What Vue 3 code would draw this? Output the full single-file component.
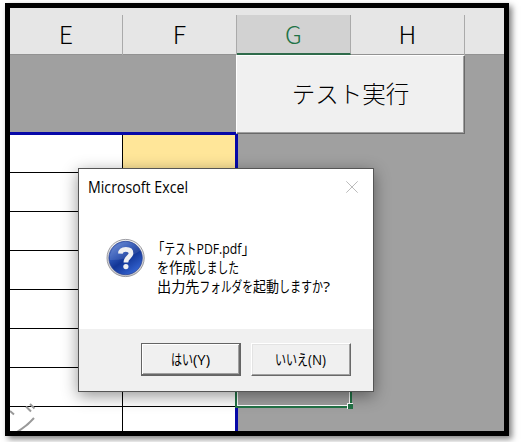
<script setup>
const columns = ['E', 'F', 'G', 'H']
const rows = [1, 2, 3, 4, 5, 6, 7, 8]
const message = [
  { y: 24, runs: [
    { t: '「', x: -5, w: 12.5 }, { t: 'テスト', x: 7.5, w: 32 },
    { t: 'PDF.pdf', x: 39.5, w: 45, latin: true }, { t: '」', x: 84.5, w: 14 },
  ] },
  { y: 43, runs: [
    { t: 'を', x: 0, w: 12 }, { t: '作成', x: 12, w: 27 }, { t: 'しました', x: 39, w: 43 },
  ] },
  { y: 62, runs: [
    { t: '出力先', x: 0, w: 42.5 }, { t: 'フォルダを', x: 42.5, w: 53.5 },
    { t: '起動', x: 96, w: 26 }, { t: 'しますか', x: 122, w: 44 }, { t: '?', x: 166, w: 7, latin: true },
  ] },
]
</script>

<template>
  <div class="page">
    <div class="window">
      <header class="heads">
        <div v-for="c in columns" :key="c" class="head" :class="{ active: c === 'G' }"><span>{{ c }}</span></div>
      </header>
      <div class="band">
        <button class="run">テスト実行</button>
      </div>
      <div class="body">
        <div class="table">
          <div v-for="r in rows" :key="r" class="row">
            <div class="cell"></div>
            <div class="cell" :class="{ gold: r === 1 }"></div>
          </div>
        </div>
      </div>
      <svg class="doodle" width="28" height="30" viewBox="0 0 28 30">
        <path d="M0 10L4 13.5M16 5.5L21 10.5M20 3L24.5 7.5" />
        <path d="M7 31Q17 25 24 17" />
      </svg>
      <div class="selection"><i></i></div>

      <section class="dialog">
        <div class="title">
          <svg width="120" height="24"><text x="0" y="18" textLength="100" lengthAdjust="spacingAndGlyphs">Microsoft Excel</text></svg>
          <svg class="close" width="12" height="12" viewBox="0 0 12 12"><path d="M.3.3L11.7 11.7M11.7.3L.3 11.7" /></svg>
        </div>
        <div class="content">
          <svg class="icon" width="40" height="40" viewBox="0 0 40 40">
            <defs>
              <linearGradient id="blue" x1="0" y1="0" x2=".7" y2="1">
                <stop offset="0" stop-color="#6e8dd6" /><stop offset=".4" stop-color="#2a52b4" />
                <stop offset=".6" stop-color="#123596" /><stop offset="1" stop-color="#3565d2" />
              </linearGradient>
              <linearGradient id="ring" x1="0" y1="0" x2="0" y2="1">
                <stop offset="0" stop-color="#f4f4f4" /><stop offset="1" stop-color="#c4c4c8" />
              </linearGradient>
            </defs>
            <circle cx="19.6" cy="20" r="18.6" fill="url(#ring)" stroke="#929298" stroke-width=".9" />
            <circle cx="19.6" cy="20" r="16.7" fill="url(#blue)" stroke="#273f91" stroke-width=".7" />
            <path d="M4 22Q20 23 35 12A17 17 0 0 0 4 17Z" fill="#fff" opacity=".1" />
            <path d="M14.4 15.6C14.6 12.2 16.8 11.3 19.9 11.3C23.3 11.3 25 12.9 25 15.3C25 19 19.9 19.2 19.9 24.4" fill="none" stroke="#f0f0f2" stroke-width="4.7" />
            <circle cx="19.9" cy="28.6" r="2.6" fill="#f0f0f2" />
          </svg>
          <svg class="message" width="185" height="72">
            <g v-for="line in message" :key="line.y">
              <text v-for="r in line.runs" :key="r.t" :x="r.x" :y="line.y" :class="{ latin: r.latin }" :textLength="r.w" lengthAdjust="spacingAndGlyphs">{{ r.t }}</text>
            </g>
          </svg>
        </div>
        <footer>
          <button class="choice default"><svg width="42" height="24">
            <text x="1" y="17" textLength="22" lengthAdjust="spacingAndGlyphs">はい</text>
            <text class="latin" x="23" y="17" textLength="17" lengthAdjust="spacingAndGlyphs">(Y)</text>
          </svg></button>
          <button class="choice"><svg width="52" height="24">
            <text x="0" y="17" textLength="33" lengthAdjust="spacingAndGlyphs">いいえ</text>
            <text class="latin" x="33" y="17" textLength="18" lengthAdjust="spacingAndGlyphs">(N)</text>
          </svg></button>
        </footer>
      </section>
    </div>
  </div>
</template>

<style>
body { background: #fff; overflow: hidden; }
</style>

<style scoped>
* { box-sizing: border-box; }
.page { width: 521px; height: 442px; padding: 3px 0 0 5px; overflow: hidden; font-family: "Noto Sans CJK JP", sans-serif; }
.window { position: relative; width: 504px; height: 433px; border: 5px solid #000; background: #a0a0a0; box-shadow: 3px 3px 6px rgba(0, 0, 0, .5); display: flex; flex-direction: column; }
.heads { flex: none; height: 47px; padding-top: 7px; display: grid; grid-template-columns: 113px 114px 114px 114px; background: #e6e6e6; border-bottom: 1px solid #929292; }
.head { display: flex; justify-content: center; font-size: 25px; font-weight: 300; line-height: 39px; color: #000; border-right: 1px solid #aaa; }
.head span { transform: translateY(-1px); }
.head.active { background: #d2d2d2; color: #217346; height: 40px; border-bottom: 2px solid #2f6b4b; }
.band { flex: none; height: 77px; padding-left: 226px; }
.run { position: relative; display: block; width: 229px; height: 79px; padding: 0 0 3px; border: 1px solid; border-color: #fff #696969 #696969 #fff; box-shadow: inset -1px -1px #a0a0a0; background: #f0f0f0; color: #000; font: 300 23.5px "Noto Sans CJK JP", sans-serif; }
.body { flex: 1; min-height: 0; overflow: hidden; }
.table { width: 228px; height: 299px; border-top: 3px solid #0608a8; border-right: 3px solid #0608a8; }
.row { height: 39px; display: grid; grid-template-columns: 112px 113px; background: #fff; }
.row:first-child { height: 38px; }
.cell { border-bottom: 1px solid #000; }
.cell + .cell { border-left: 1px solid #000; }
.gold { background: #ffe699; }
.doodle { position: absolute; left: 0; bottom: 0; fill: none; stroke: #999; stroke-width: 2; }
.selection { position: absolute; left: 225px; top: 359px; width: 117px; height: 41px; border: 2px solid #217346; box-shadow: inset 0 0 0 1px #fff; }
.selection i { position: absolute; right: -3px; bottom: -3px; width: 6px; height: 6px; background: #217346; border: solid #fff; border-width: 1px 0 0 1px; }
.dialog { position: absolute; left: 68px; top: 160px; width: 296px; height: 224px; border: 1px solid #555; background: #fff; box-shadow: 0 4px 15px rgba(0, 0, 0, .42); display: flex; flex-direction: column; }
.title { height: 36px; padding: 6px 15px 0 9px; display: flex; justify-content: space-between; }
.title text { font: 15.5px "Open Sans", sans-serif; }
.close { margin-top: 6px; stroke: #bcbcbc; fill: none; }
.content { flex: 1; display: flex; padding: 33px 0 0 27px; }
.icon { flex: none; }
.message { margin-left: 11px; margin-top: -8px; overflow: visible; }
.message text, .choice text { font: 14.5px "Noto Sans CJK JP", sans-serif; }
.message text.latin, .choice text.latin { font: 14.5px "Open Sans", sans-serif; }
footer { height: 62px; padding: 14px 22px; background: #f0f0f0; display: flex; justify-content: flex-end; gap: 10px; }
.choice { width: 100px; height: 33px; padding: 0; display: flex; align-items: center; justify-content: center; background: #f0f0f0; border: 1px solid; border-color: #fff #696969 #696969 #fff; box-shadow: inset -1px -1px #a0a0a0, inset 1px 1px #e3e3e3; color: #000; }
.choice svg { overflow: visible; }
.choice.default { border-color: #646464; box-shadow: inset -1px -1px #696969, inset 1px 1px #fff, inset -2px -2px #a0a0a0; }
</style>
